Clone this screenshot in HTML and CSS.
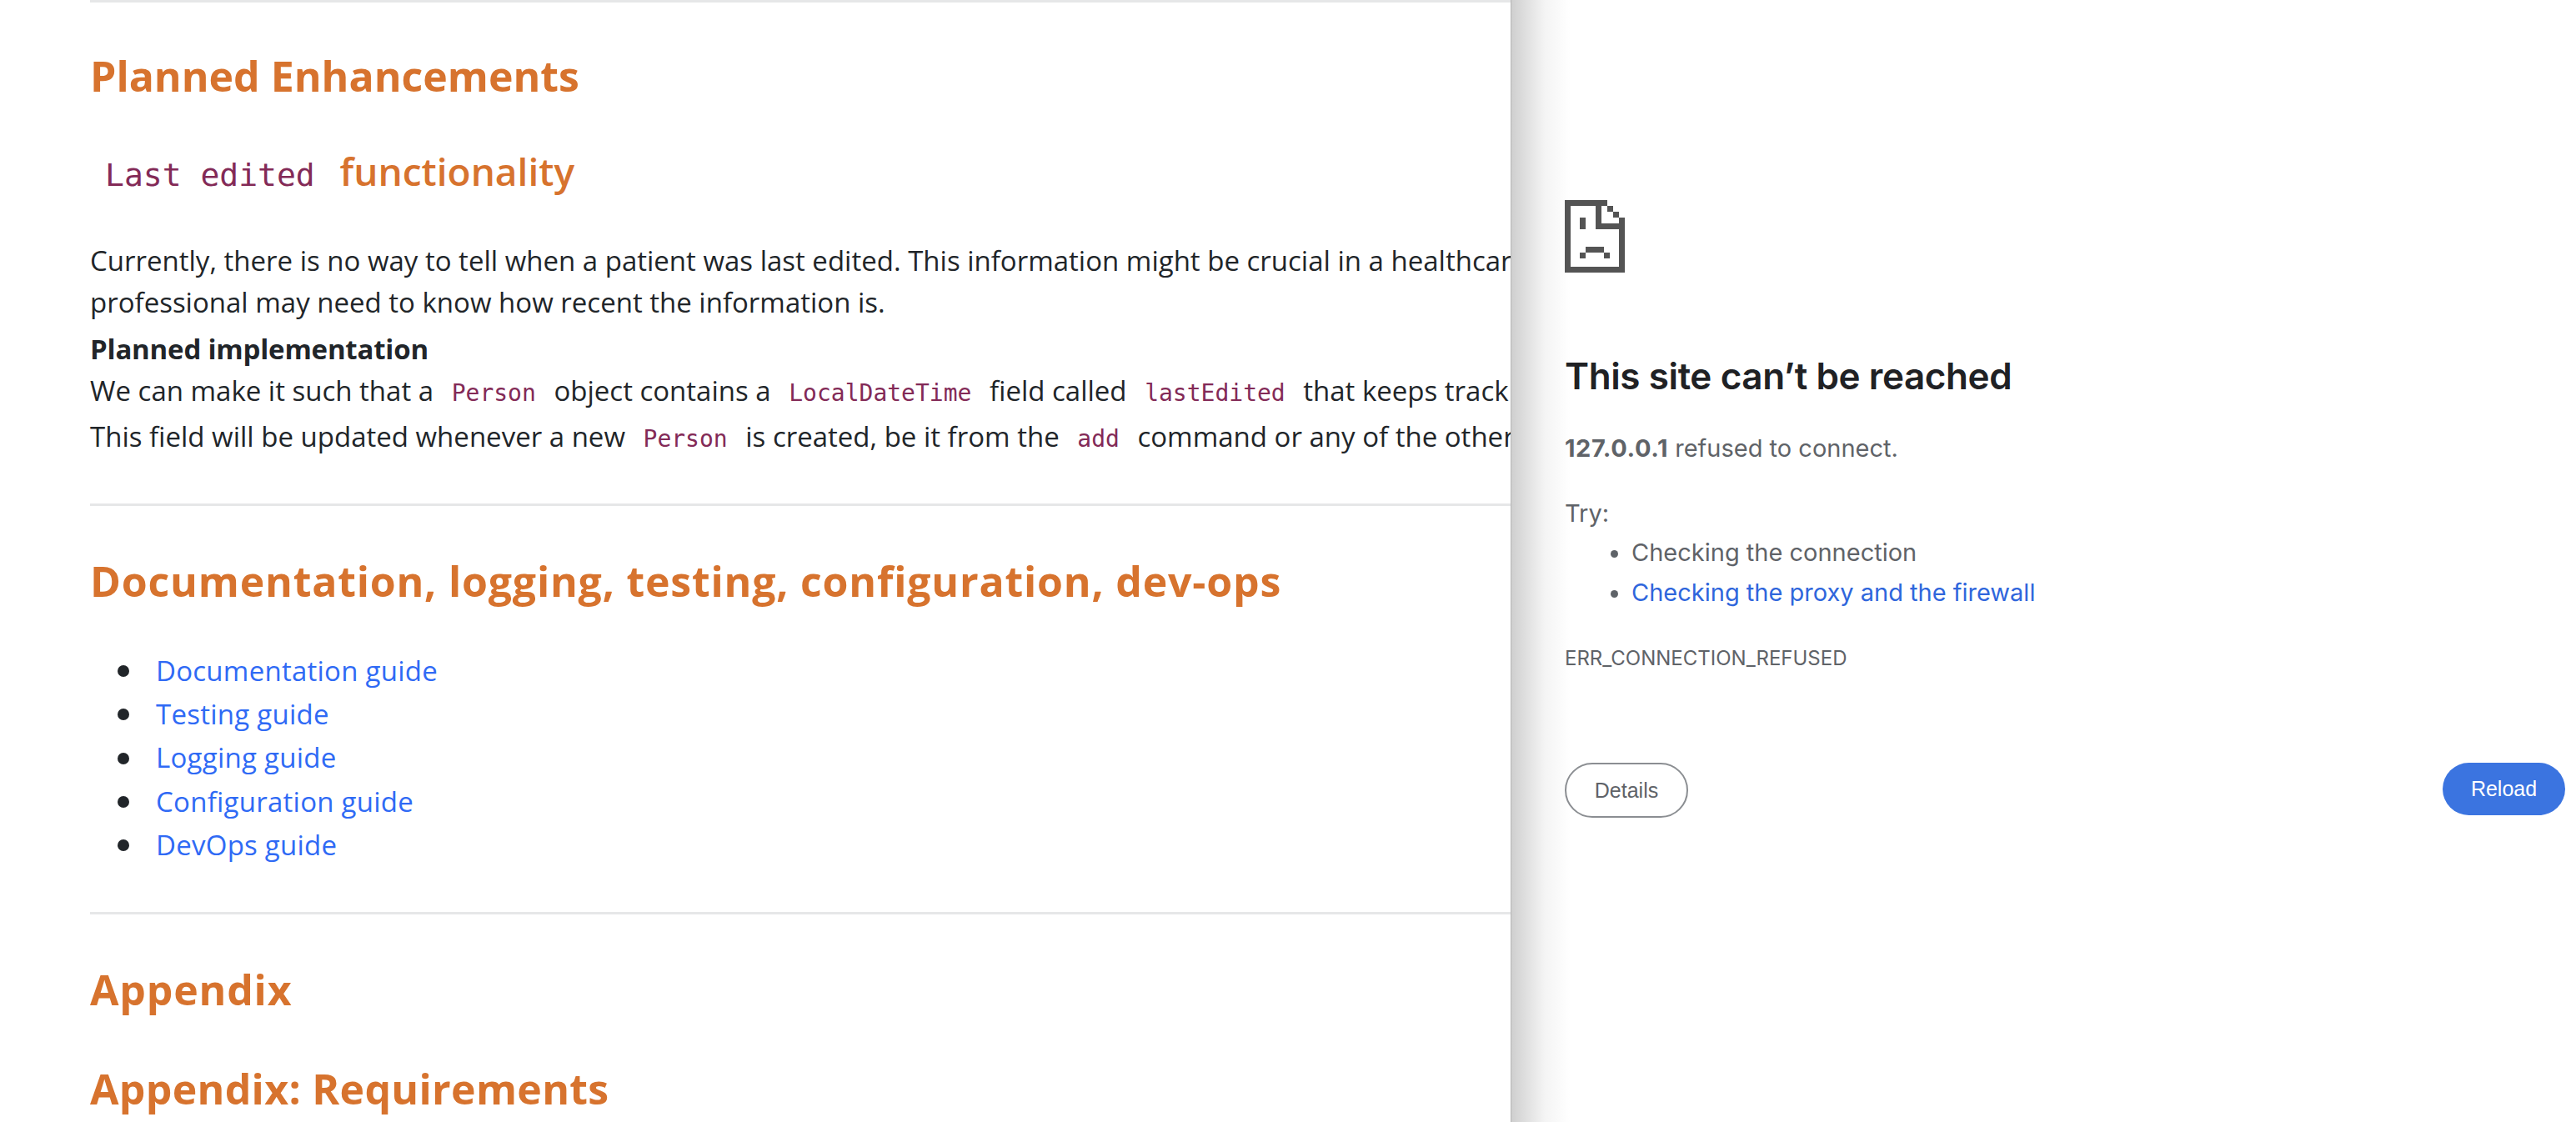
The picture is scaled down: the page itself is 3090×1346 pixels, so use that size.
FILE: index.html
```html
<!DOCTYPE html>
<html lang="en">
<head>
  <meta charset="UTF-8">
  <title>Developer Guide</title>
  <link rel="stylesheet" href="styles.css">
</head>
<body>
  <main class="doc">
    <hr class="rule rule-top">
    <h2 class="title title-first">Planned Enhancements</h2>
    <h3 class="subtitle"><code class="code-big">Last edited</code> functionality</h3>
    <p class="para">Currently, there is no way to tell when a patient was last edited. This information might be crucial in a healthcare setting where a healthcare<br>professional may need to know how recent the information is.</p>
    <p class="para-strong">Planned implementation</p>
    <p class="para para-code">We can make it such that a <code>Person</code> object contains a <code>LocalDateTime</code> field called <code>lastEdited</code> that keeps track of the time of the last edit.<br>This field will be updated whenever a new <code>Person</code> is created, be it from the <code>add</code> command or any of the other commands.</p>
    <hr class="rule">
    <h2 class="title title-wide">Documentation, logging, testing, configuration, dev-ops</h2>
    <ul class="guides">
      <li><a href="#">Documentation guide</a></li>
      <li><a href="#">Testing guide</a></li>
      <li><a href="#">Logging guide</a></li>
      <li><a href="#">Configuration guide</a></li>
      <li><a href="#">DevOps guide</a></li>
    </ul>
    <hr class="rule">
    <h2 class="title title-wide">Appendix</h2>
    <h2 class="title title-next">Appendix: Requirements</h2>
  </main>

  <aside class="error-panel">
    <svg class="sad-file" width="72" height="87" viewBox="0 0 72 87" fill="#545454">
      <path d="M0 0H51V7H44V28H72V87H0ZM7 7V80H65V35H37V7Z"/>
      <path d="M51 7H58V14H51ZM58 14H65V21H58ZM65 21H72V28H65Z"/>
      <path d="M18 21H25V35H18ZM25 56H47V63H25ZM18 63H25V70H18ZM47 63H54V70H47Z"/>
    </svg>
    <h1 class="error-title">This site can’t be reached</h1>
    <p class="error-text"><b>127.0.0.1</b> refused to connect.</p>
    <p class="error-try">Try:</p>
    <ul class="error-list">
      <li>Checking the connection</li>
      <li><a href="#">Checking the proxy and the firewall</a></li>
    </ul>
    <p class="error-code">ERR_CONNECTION_REFUSED</p>
    <div class="error-buttons">
      <button class="btn-details">Details</button>
      <button class="btn-reload">Reload</button>
    </div>
  </aside>
</body>
</html>
```

FILE: styles.css
```css
html, body {
  margin: 0;
  height: 1346px;
  overflow: hidden;
  background: #fff;
}
body {
  display: flex;
}

/* document on the left */
.doc {
  width: 1812px;
  flex: none;
  overflow: hidden;
  box-sizing: border-box;
  padding-left: 108px;
  font-family: "Open Sans", sans-serif;
  font-size: 33px;
  color: #212529;
  white-space: nowrap;
}
.rule {
  height: 3px;
  border: 0;
  margin: 0;
  background: #e6e7e8;
}
.title {
  margin: 58px 0 0;
  font-size: 50px;
  line-height: 64px;
  font-weight: 700;
  color: #d7732e;
}
.title-first { margin-top: 56px; }
.title-wide { letter-spacing: 0.8px; }
.title-next { margin-top: 55px; letter-spacing: 0.3px; }
.subtitle {
  margin: 54px 0 0;
  font-size: 46px;
  line-height: 56px;
  font-weight: 600;
  color: #d7732e;
}
.subtitle .code-big {
  font-size: 38px;
  padding: 0 18px;
}
code {
  font-family: "DejaVu Sans Mono", monospace;
  font-size: 28px;
  font-weight: 400;
  color: #832a57;
  padding: 0 13px;
}
.para {
  margin: 50px 0 0;
  line-height: 50px;
}
.para-strong {
  margin: 5px 0 0;
  line-height: 52px;
  font-weight: 700;
  letter-spacing: -0.2px;
}
.para-code {
  margin: -2px 0 0;
  line-height: 52px;
}
.para-code + .rule { margin-top: 51px; }
.guides {
  margin: 50px 0 0;
  padding: 0 0 0 33px;
  list-style: none;
  line-height: 52.2px;
}
.guides li {
  display: flex;
  align-items: center;
  gap: 32px;
}
.guides li::before {
  content: "";
  width: 14px;
  height: 14px;
  border-radius: 50%;
  background: #212529;
}
.guides a {
  color: #2f6af5;
  text-decoration: none;
  letter-spacing: 0.25px;
}
.guides + .rule { margin-top: 54px; }

/* chrome error page on the right */
.error-panel {
  flex: 1;
  box-sizing: border-box;
  border-left: 1px solid #b4b4b4;
  padding: 240px 13px 0 64px;
  background: linear-gradient(to right, #cfcfcf, #f4f4f4 40px, #fff 70px);
  font-family: Inter, sans-serif;
  font-size: 29px;
  color: #5f6368;
}
.sad-file {
  display: block;
}
.error-title {
  margin: 96px 0 0;
  font-size: 44px;
  line-height: 56px;
  font-weight: 600;
  letter-spacing: -0.4px;
  color: #202124;
}
.error-text {
  margin: 39px 0 0;
  line-height: 40px;
}
.error-text b {
  font-weight: 700;
  letter-spacing: 0.6px;
}
.error-try {
  margin: 38px 0 0;
  line-height: 40px;
}
.error-list {
  margin: 3px 0 0;
  padding-left: 80px;
  line-height: 48px;
}
.error-list a {
  color: #2f66dc;
  text-decoration: none;
}
.error-code {
  margin: 35px 0 0;
  font-size: 24px;
  line-height: 40px;
}
.error-buttons {
  display: flex;
  justify-content: space-between;
  align-items: flex-start;
  margin-top: 105px;
}
.error-buttons button {
  font-family: "Liberation Sans", sans-serif;
  font-size: 25px;
  border-radius: 34px;
  cursor: pointer;
}
.btn-details {
  width: 148px;
  height: 66px;
  background: #fff;
  border: 2px solid #8b8e92;
  color: #5f6368;
}
.btn-reload {
  width: 147px;
  height: 63px;
  background: #3b74e0;
  border: 0;
  color: #fff;
}
```
